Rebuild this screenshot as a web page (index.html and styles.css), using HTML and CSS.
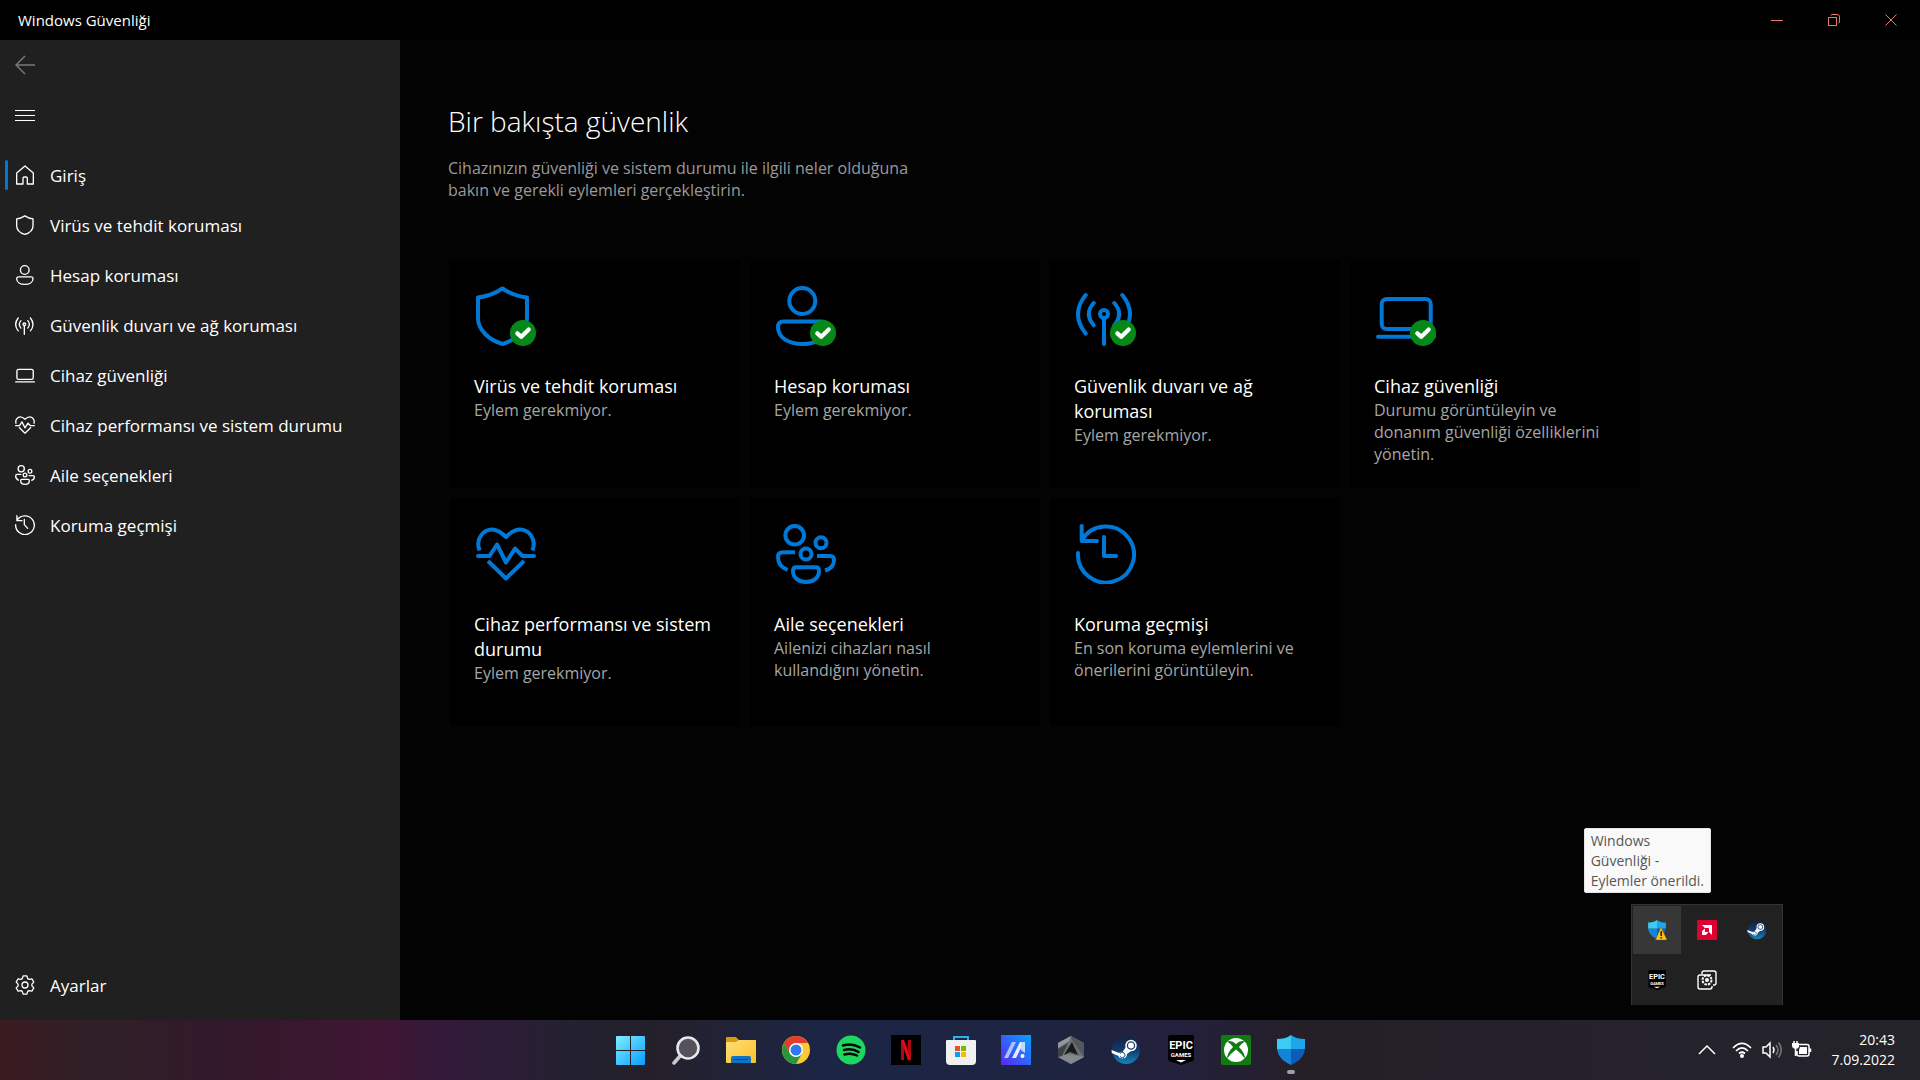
FILE: index.html
```
<!DOCTYPE html>
<html lang="tr">
<head>
    <meta charset="UTF-8">
    <meta name="viewport" content="width=device-width, initial-scale=1.0">
    <title>Windows Güvenliği</title>
    <link rel="stylesheet" href="styles.css">
</head>
<body>
    <!-- shared icons, used small in the sidebar and large in the cards -->
    <svg class="sprite" aria-hidden="true">
        <symbol id="shield" viewBox="0 0 60 60"><path d="M26.500 2.500C19 7.500 11 10.500 2 11.500V32C2 44 13 54 26.500 58C40 54 51 44 51 32V11.500C42 10.500 34 7.500 26.500 2.500Z"/></symbol>
        <symbol id="person" viewBox="0 0 60 60"><circle cx="26.300" cy="15" r="13"/><path d="M7.500 35.500H45.500Q51 35.500 51 41C51 52 40 58 26.500 58S2 52 2 41Q2 35.500 7.500 35.500Z"/></symbol>
        <symbol id="antenna" viewBox="0 0 60 60"><circle cx="28" cy="28" r="4"/><path d="M28 33V58M9.700 9Q-5.700 28 9.700 47.500M17.700 17Q8 28 17.700 39.300M38.300 17Q48 28 38.300 39.300M46.300 9Q61.700 28 46.300 47.500"/></symbol>
        <symbol id="laptop" viewBox="0 0 60 60"><rect x="5.700" y="13" width="49" height="30" rx="5"/><path d="M2 50.700H58"/></symbol>
        <symbol id="heart" viewBox="0 0 60 60"><path stroke-linecap="butt" d="M3.500 26.500C-1 14 8 5.500 16 5.500C21 5.500 25 8 30 13C35 8 39 5.500 44 5.500C52 5.500 61 14 56.500 26.500M12 37L30 54.500L48 37"/><path d="M2 32H13.500L21 20.500L30 38.500L39 24.500L46.500 32H58"/></symbol>
        <symbol id="family" viewBox="0 0 60 60"><circle cx="18.700" cy="11.300" r="9.300"/><circle cx="45" cy="18.700" r="5.500"/><circle cx="30" cy="30" r="5.500"/><path stroke-linecap="butt" d="M20 43.300H40Q43 43.300 43 47C43 54 37 58 30 58S17 54 17 47Q17 43.300 20 43.300ZM19 28.300H7Q2 28.300 2 33C2 39 5 43.500 11.500 46M41 32H54Q58 32 58 36C58 41 55 45 49 46.500"/></symbol>
        <symbol id="history" viewBox="0 0 60 60"><path d="M2 29A28 28 0 1 0 6 16M5.700 2V17H21M28 13V32H40"/></symbol>
        <symbol id="check" viewBox="0 0 26 26"><circle cx="13" cy="13" r="13" fill="#068918"/><path d="M7.300 13.300L11.300 16.800L18.700 9.500" fill="none" stroke="#fff" stroke-width="4.200" stroke-linecap="round" stroke-linejoin="round"/></symbol>
        <symbol id="defender" viewBox="0 0 28 30">
            <path fill="#3ccbf4" d="M14 0C10 3 5 4 0 4V14H14Z"/>
            <path fill="#1fa5ea" d="M14 0C18 3 23 4 28 4V14H14Z"/>
            <path fill="#1583d8" d="M0 14C1 22 7 27 14 30V14Z"/>
            <path fill="#0d5cb8" d="M28 14C27 22 21 27 14 30V14Z"/>
        </symbol>
        <symbol id="steam" viewBox="0 0 30 30">
            <linearGradient id="steamBg" x2="0" y2="1"><stop offset="0" stop-color="#14213f"/><stop offset=".5" stop-color="#123a6d"/><stop offset="1" stop-color="#1387b8"/></linearGradient>
            <circle cx="15" cy="15" r="14" fill="url(#steamBg)"/>
            <path fill="#fff" d="M.5 15L8 18Q10 17 11.500 17L15 12L15 10L25 12Q25 16 20 16L16 19Q16 23 11.500 23.500Q8 23 7.500 21L.8 18Z"/>
            <circle cx="20" cy="10.500" r="5.700" fill="#fff"/>
            <circle cx="20" cy="10.500" r="3.600" fill="none" stroke="#1b3f6b" stroke-width="1.300"/>
            <path fill="none" stroke="#1a5080" stroke-width="1" d="M9 18.500A2.700 2.700 0 1 1 9 21.500"/>
        </symbol>
    </svg>

    <header class="titlebar">
        <span class="app-name">Windows Güvenliği</span>
        <div class="window-buttons">
            <button aria-label="Simge durumuna küçült"><svg width="12" height="12" viewBox="0 0 12 12"><path d="M0 6.500H12"/></svg></button>
            <button aria-label="Önceki boyut"><svg width="12" height="12" viewBox="0 0 12 12"><rect x=".5" y="3.500" width="8" height="8"/><path d="M3 1.500Q3 .5 4 .5H9Q11.500 .5 11.500 3V8Q11.500 9 10.500 9"/></svg></button>
            <button aria-label="Kapat"><svg width="12" height="12" viewBox="0 0 12 12"><path d="M.5 .5L11.500 11.500M11.500 .5L.5 11.500"/></svg></button>
        </div>
    </header>

    <div class="window">
        <aside class="sidebar">
            <button class="icon-btn back" aria-label="Geri"><svg width="20" height="20" viewBox="0 0 20 20"><path d="M20 10H1M10 1L1 10L10 19" stroke-width="1.500"/></svg></button>
            <button class="icon-btn" aria-label="Menü"><svg width="20" height="20" viewBox="0 0 20 20"><path d="M0 5.500H20M0 10.500H20M0 15.500H20" stroke-width="1"/></svg></button>
            <nav class="nav">
                <a href="#" class="active"><svg viewBox="0 0 60 60"><path d="M5 24L30 3L55 24V57H37V40Q37 36 33 36H28Q24 36 24 40V57H5Z"/></svg>Giriş</a>
                <a href="#"><svg class="inset"><use href="#shield"/></svg>Virüs ve tehdit koruması</a>
                <a href="#"><svg class="inset"><use href="#person"/></svg>Hesap koruması</a>
                <a href="#"><svg><use href="#antenna"/></svg>Güvenlik duvarı ve ağ koruması</a>
                <a href="#"><svg><use href="#laptop"/></svg>Cihaz güvenliği</a>
                <a href="#"><svg><use href="#heart"/></svg>Cihaz performansı ve sistem durumu</a>
                <a href="#"><svg><use href="#family"/></svg>Aile seçenekleri</a>
                <a href="#"><svg viewBox="0 0 60 60"><path d="M2 29A28 28 0 1 0 6 16M5.700 2V17H21M28 13V29L38 40"/></svg>Koruma geçmişi</a>
                <a href="#" class="settings"><svg class="gear" viewBox="0 0 20 20"><path d="M8.100 .9H11.900L12.700 3.600L14.200 4.400L16.900 3.800L18.800 7.100L16.900 9.100V10.900L18.800 12.900L16.900 16.200L14.200 15.600L12.700 16.400L11.900 19.100H8.100L7.300 16.400L5.800 15.600L3.100 16.200L1.200 12.900L3.100 10.900V9.100L1.200 7.100L3.100 3.800L5.800 4.400L7.300 3.600Z"/><circle cx="10" cy="10" r="3"/></svg>Ayarlar</a>
            </nav>
        </aside>

        <main class="content">
            <h1>Bir bakışta güvenlik</h1>
            <p class="intro">Cihazınızın güvenliği ve sistem durumu ile ilgili neler olduğuna bakın ve gerekli eylemleri gerçekleştirin.</p>

            <div class="cards">
                <a href="#" class="card">
                    <div class="card-icon"><svg><use href="#shield"/></svg><svg class="badge"><use href="#check"/></svg></div>
                    <h2>Virüs ve tehdit koruması</h2>
                    <p>Eylem gerekmiyor.</p>
                </a>
                <a href="#" class="card">
                    <div class="card-icon"><svg><use href="#person"/></svg><svg class="badge"><use href="#check"/></svg></div>
                    <h2>Hesap koruması</h2>
                    <p>Eylem gerekmiyor.</p>
                </a>
                <a href="#" class="card">
                    <div class="card-icon"><svg><use href="#antenna"/></svg><svg class="badge"><use href="#check"/></svg></div>
                    <h2>Güvenlik duvarı ve ağ koruması</h2>
                    <p>Eylem gerekmiyor.</p>
                </a>
                <a href="#" class="card">
                    <div class="card-icon"><svg><use href="#laptop"/></svg><svg class="badge"><use href="#check"/></svg></div>
                    <h2>Cihaz güvenliği</h2>
                    <p>Durumu görüntüleyin ve donanım güvenliği özelliklerini yönetin.</p>
                </a>
                <a href="#" class="card">
                    <div class="card-icon"><svg><use href="#heart"/></svg></div>
                    <h2>Cihaz performansı ve sistem durumu</h2>
                    <p>Eylem gerekmiyor.</p>
                </a>
                <a href="#" class="card">
                    <div class="card-icon"><svg><use href="#family"/></svg></div>
                    <h2>Aile seçenekleri</h2>
                    <p>Ailenizi cihazları nasıl kullandığını yönetin.</p>
                </a>
                <a href="#" class="card">
                    <div class="card-icon"><svg><use href="#history"/></svg></div>
                    <h2>Koruma geçmişi</h2>
                    <p>En son koruma eylemlerini ve önerilerini görüntüleyin.</p>
                </a>
            </div>
        </main>
    </div>

    <div class="tooltip" role="tooltip">Windows<br>Güvenliği -<br>Eylemler önerildi.</div>

    <div class="tray-popup">
        <button class="hover" aria-label="Windows Güvenliği">
            <svg width="20" height="20" viewBox="0 0 20 20"><use href="#defender" x="1" y="0" width="18" height="19"/><path fill="#ffc21a" stroke="#8a6500" stroke-width=".5" d="M14 7L20 20H8.500Z"/><path stroke="#222" stroke-width="1.500" d="M14.200 11V16M14.200 17V18.500"/></svg>
        </button>
        <button aria-label="AMD">
            <svg width="20" height="20" viewBox="0 0 20 20"><rect width="20" height="20" fill="#dd0031"/><path fill="#fff" d="M5 5H15V15L12 12V8H8ZM5 11L8 8.500V12H11.500L9 15H5Z"/></svg>
        </button>
        <button aria-label="Steam"><svg width="20" height="20"><use href="#steam"/></svg></button>
        <button aria-label="Epic Games">
            <svg class="epic" width="20" height="20" viewBox="0 0 30 30"><path fill="#000" d="M4 0H26Q28 0 28 2V24Q28 25 27 26L15 30L3 26Q2 25 2 24V2Q2 0 4 0Z"/><text x="15" y="14" font-size="11">EPIC</text><text x="15" y="22" font-size="6">GAMES</text><path fill="#fff" d="M10 25H20L15 27.500Z"/></svg>
        </button>
        <button aria-label="Ayar aracı">
            <svg width="20" height="20" viewBox="0 0 20 20" fill="none" stroke="#fff" stroke-width="1.400"><path d="M5 4V3Q5 1 7 1H17Q19 1 19 3V13Q19 15 17 15H16M14 5H3Q1 5 1 7V17Q1 19 3 19H13Q15 19 15 17V16"/><circle cx="10" cy="10" r="4.500" stroke-width="2" stroke-dasharray="2.500 1"/><circle cx="10" cy="10" r="2" fill="#fff" stroke="none"/></svg>
        </button>
    </div>

    <footer class="taskbar">
        <div class="apps">
            <button aria-label="Başlat"><svg viewBox="0 0 30 30"><linearGradient id="winBg" x2="1" y2="1"><stop offset="0" stop-color="#7df0ff"/><stop offset="1" stop-color="#0a9bff"/></linearGradient><path fill="url(#winBg)" d="M0 2Q0 1 1 1H14V15H0ZM15 1H28Q29 1 29 2V15H15ZM0 16H14V30H1Q0 30 0 29ZM15 16H29V29Q29 30 28 30H15Z"/></svg></button>
            <button aria-label="Ara"><svg viewBox="0 0 30 30"><path d="M10 20L3 28" stroke="#c9cbd0" stroke-width="3.500" stroke-linecap="round"/><circle cx="17" cy="13" r="10.500" fill="#55525c" stroke="#e6e8ea" stroke-width="2.600"/></svg></button>
            <button aria-label="Dosya Gezgini"><svg viewBox="0 0 30 30"><path fill="#dc9a09" d="M0 3Q0 2 1 2H10L13 5H29Q30 5 30 6V12H0Z"/><linearGradient id="folder" x2="1" y2="1"><stop offset="0" stop-color="#ffe07a"/><stop offset="1" stop-color="#fdbf24"/></linearGradient><path fill="url(#folder)" d="M0 7H10L13 5H29Q30 5 30 6V27Q30 28 29 28H1Q0 28 0 27Z"/><path fill="#0f72c4" d="M5 28V23Q5 21 7 21H23Q25 21 25 23V28Z"/><path stroke="#064b8d" stroke-width="1" d="M8 24.500H22"/></svg></button>
            <button aria-label="Chrome"><svg viewBox="0 0 30 30"><circle cx="15" cy="15" r="14" fill="#fcc934"/><path fill="#e33b2e" d="M2.900 8A14 14 0 0 1 27.100 8H15L9 18.500Z"/><path fill="#27963f" d="M2.900 8A14 14 0 0 0 15 29L21 18.500L9 18.500Z"/><circle cx="15" cy="15" r="7" fill="#fff"/><circle cx="15" cy="15" r="5.500" fill="#3078ee"/></svg></button>
            <button aria-label="Spotify"><svg viewBox="0 0 30 30"><circle cx="15" cy="15" r="14.500" fill="#1ed760"/><path fill="none" stroke="#000" stroke-width="2.500" stroke-linecap="round" d="M7 10.500Q16 8 24 12.500M8 15Q16 13 22.500 17M8.500 19.500Q15 17.500 21 20.500"/></svg></button>
            <button aria-label="Netflix"><svg viewBox="0 0 30 30"><rect width="30" height="30" fill="#000"/><rect x="10" y="5" width="3" height="20" fill="#b20710"/><rect x="17" y="5" width="3" height="20" fill="#b20710"/><path stroke="#e50914" stroke-width="3" d="M11.500 5L18.500 25"/></svg></button>
            <button aria-label="Microsoft Store"><svg viewBox="0 0 30 30"><path fill="none" stroke="#25b4ec" stroke-width="2" d="M8 6V2Q8 2 9 2H22V6"/><path fill="#f1f1f1" d="M0 6Q0 5 1 5H29Q30 5 30 6V26Q30 30 26 30H4Q0 30 0 26Z"/><rect x="9" y="11" width="5" height="5" fill="#f25022"/><rect x="15" y="11" width="5" height="5" fill="#7fba00"/><rect x="9" y="17" width="5" height="5" fill="#00a4ef"/><rect x="15" y="17" width="5" height="5" fill="#ffb900"/></svg></button>
            <button aria-label="MyASUS"><svg viewBox="0 0 30 30"><linearGradient id="asus" x1="1" x2="0" y2="1"><stop offset="0" stop-color="#05a4ff"/><stop offset="1" stop-color="#5b25f5"/></linearGradient><rect width="30" height="30" fill="url(#asus)"/><path fill="#a9c4ff" d="M3 23L11 7H15L7 23Z"/><path fill="#e4edff" d="M11 23L19 7H23L15 23Z"/><path fill="#c4d8ff" d="M20 7H24V18L20 15Z"/><circle cx="21.500" cy="21" r="2" fill="#fff"/></svg></button>
            <button aria-label="Armoury Crate"><svg viewBox="0 0 30 30"><path fill="#6d7175" d="M15 1L28 8V22L15 29L2 22V8Z"/><path fill="#94989c" d="M15 1L2 8V13L13 6Z"/><path fill="#54585c" d="M15 1L28 8V22L16 5Z"/><path fill="#85898d" d="M2 22L15 29L28 22L12 19Z"/><path fill="#3d4145" d="M12 8L2 14V22L6 21Z"/><path fill="#17191c" d="M16 7L22 20L14 17L8 20Z"/></svg></button>
            <button aria-label="Steam"><svg><use href="#steam"/></svg></button>
            <button aria-label="Epic Games"><svg class="epic" viewBox="0 0 30 30"><path fill="#000" d="M4 0H26Q28 0 28 2V24Q28 25 27 26L15 30L3 26Q2 25 2 24V2Q2 0 4 0Z"/><text x="15" y="14" font-size="11">EPIC</text><text x="15" y="22" font-size="6">GAMES</text><path fill="#fff" d="M10 25H20L15 27.500Z"/></svg></button>
            <button aria-label="Xbox"><svg viewBox="0 0 30 30"><rect width="30" height="30" rx="2" fill="#107c10"/><circle cx="15" cy="15" r="12" fill="#fff"/><path fill="#107c10" d="M6 6.500Q11 5 15 9Q19 5 24 6.500Q21 8 18 12Q24 18 24 24Q20 18 15 14.500Q10 18 6 24Q6 18 12 12Q9 8 6 6.500Z"/></svg></button>
            <button class="running" aria-label="Windows Güvenliği"><svg><use href="#defender"/></svg></button>
        </div>
        <div class="tray">
            <button aria-label="Gizli simgeleri göster"><svg width="20" height="20" viewBox="0 0 20 20"><path d="M2 14L10 6L18 14"/></svg></button>
            <button class="status" aria-label="Ağ, ses ve pil">
                <svg width="20" height="20" viewBox="0 0 20 20"><path d="M1 8Q10 -1 19 8M4 11Q10 5 16 11M7 13.500Q10 11 13 13.500" stroke-width="1.700"/><circle cx="10" cy="16" r="2" fill="#fff" stroke="none"/></svg>
                <svg width="20" height="20" viewBox="0 0 20 20"><path d="M1 7H4L8 3V17L4 13H1ZM11 7Q13 10 11 13" stroke-width="1.500"/><path stroke="#777" d="M14 5Q18 10 14 15M16.500 2.500Q22 10 16.500 17.500"/></svg>
                <svg width="20" height="20" viewBox="0 0 20 20"><path d="M7 4.500H15Q17 4.500 17 6.500V14Q17 16 15 16H7Q5 16 5 14V11M18.500 8.500V12M2 1V4M5 1V4M3.500 9V16" stroke-width="1.500"/><path fill="#fff" stroke="none" d="M0 3H7V7Q6 9 3.500 9Q0 8 0 6ZM8 7H15V14H7V10Z"/></svg>
            </button>
            <button class="clock"><span>20:43</span><span>7.09.2022</span></button>
        </div>
    </footer>
</body>
</html>
```
FILE: styles.css
```
* {
    box-sizing: border-box;
}

body {
    margin: 0;
    min-height: 100vh;
    display: flex;
    flex-direction: column;
    position: relative;
    background: #030303;
    color: white;
    font-family: "Open Sans", "Noto Sans", sans-serif;
    font-size: 17px;
}

h1, h2, p {
    margin: 0;
    font-weight: 400;
}

a {
    color: inherit;
    text-decoration: none;
}

button {
    display: flex;
    align-items: center;
    justify-content: center;
    padding: 0;
    border: none;
    background: none;
    color: inherit;
    font: inherit;
    cursor: pointer;
}

.sprite {
    position: absolute;
    width: 0;
    height: 0;
}

/* title bar */
.titlebar {
    display: flex;
    justify-content: space-between;
    height: 40px;
    padding: 0 1px 0 18px;
    background: black;
}

.app-name {
    font-size: 15px;
    line-height: 40px;
}

.window-buttons {
    display: flex;
}

.window-buttons button {
    width: 57px;
}

.window-buttons svg {
    fill: none;
    stroke: #e8766c;
}

/* sidebar */
.window {
    flex: 1;
    display: flex;
}

.sidebar {
    width: 400px;
    flex-shrink: 0;
    display: flex;
    flex-direction: column;
    background: #202020;
}

.icon-btn {
    width: 50px;
    height: 50px;
}

.icon-btn svg {
    fill: none;
    stroke: white;
}

.back svg {
    stroke: #777;
}

.nav {
    flex: 1;
    display: flex;
    flex-direction: column;
    padding: 10px 0;
}

.nav a {
    display: flex;
    align-items: center;
    gap: 15px;
    height: 50px;
    padding-left: 15px;
    position: relative;
}

.nav svg {
    width: 20px;
    height: 20px;
    fill: none;
    stroke: white;
    stroke-width: 4;
    stroke-linecap: round;
    stroke-linejoin: round;
}

.nav .inset {
    margin: 0 -1px 0 1px;
}

.nav .gear {
    stroke-width: 1.3;
}

.nav .active::before {
    content: "";
    position: absolute;
    left: 5px;
    top: 10px;
    width: 3px;
    height: 30px;
    border-radius: 2px;
    background: #0078d7;
}

.nav .settings {
    margin-top: auto;
}

/* content */
.content {
    flex: 1;
    padding: 59px 48px;
}

h1 {
    font-size: 28px;
    font-weight: 300;
    line-height: 44px;
}

.intro {
    max-width: 480px;
    margin-top: 14px;
    color: #9a9a9a;
    font-size: 16px;
    line-height: 22px;
}

.cards {
    display: grid;
    grid-template-columns: repeat(auto-fill, 290px);
    grid-auto-rows: minmax(228px, auto);
    gap: 10px;
    max-width: 1200px;
    margin: 59px 2px 0;
}

.card {
    padding: 26px 24px 20px;
    background: black;
}

.card-icon {
    position: relative;
    width: 60px;
    height: 60px;
    margin: 0 2px 28px;
}

.card-icon svg {
    display: block;
    width: 60px;
    height: 60px;
    fill: none;
    stroke: #0078d7;
    stroke-width: 4;
    stroke-linecap: round;
    stroke-linejoin: round;
}

.card-icon .badge {
    position: absolute;
    right: 0;
    bottom: 0;
    width: 26px;
    height: 26px;
    stroke: none;
}

.card h2 {
    font-size: 18px;
    line-height: 25px;
}

.card p {
    color: #a6a6a6;
    font-size: 16px;
    line-height: 22px;
}

/* hidden tray icons */
.tooltip {
    position: absolute;
    right: 209px;
    bottom: 187px;
    padding: 2px 6px 1px;
    border: 1px solid #e5e5e5;
    border-radius: 2px;
    background: #f9f9f9;
    color: #575757;
    font-size: 14px;
    line-height: 20px;
}

.tray-popup {
    position: absolute;
    right: 137px;
    bottom: 75px;
    display: grid;
    grid-template-columns: repeat(3, 50px);
    grid-auto-rows: 50px;
    border: 1px solid #333;
    border-bottom: none;
    background: #212121;
}

.tray-popup .hover {
    margin: 1px;
    background: #373737;
}

.epic text {
    fill: white;
    font-family: "Liberation Sans Narrow", Roboto, sans-serif;
    font-weight: 700;
    text-anchor: middle;
}

/* taskbar */
.taskbar {
    display: grid;
    grid-template-columns: 1fr auto 1fr;
    height: 60px;
    padding-left: 2px;
    background: linear-gradient(to right, #3a1b20 0, #2f1f27 5%, #33192b 12%, #3f1633 20%, #33193a 23%, #232130 30%, #24202a 34%, #1c2545 43%, #1d2440 54%, #23203a 62%, #251f27 68%, #25222c 85%, #242329 100%);
}

.apps {
    grid-column: 2;
    display: flex;
}

.apps button {
    position: relative;
    width: 55px;
}

.apps svg {
    width: 30px;
    height: 30px;
}

.running::after {
    content: "";
    position: absolute;
    bottom: 6px;
    width: 8px;
    height: 4px;
    border-radius: 2px;
    background: #a0a0a4;
}

.tray {
    display: flex;
    justify-content: flex-end;
    align-items: center;
    gap: 15px;
    padding-right: 25px;
}

.tray svg {
    fill: none;
    stroke: white;
    stroke-width: 1.5;
}

.status {
    gap: 10px;
}

.clock {
    flex-direction: column;
    align-items: flex-end;
    width: 68px;
    font-size: 14px;
    line-height: 20px;
}
```
